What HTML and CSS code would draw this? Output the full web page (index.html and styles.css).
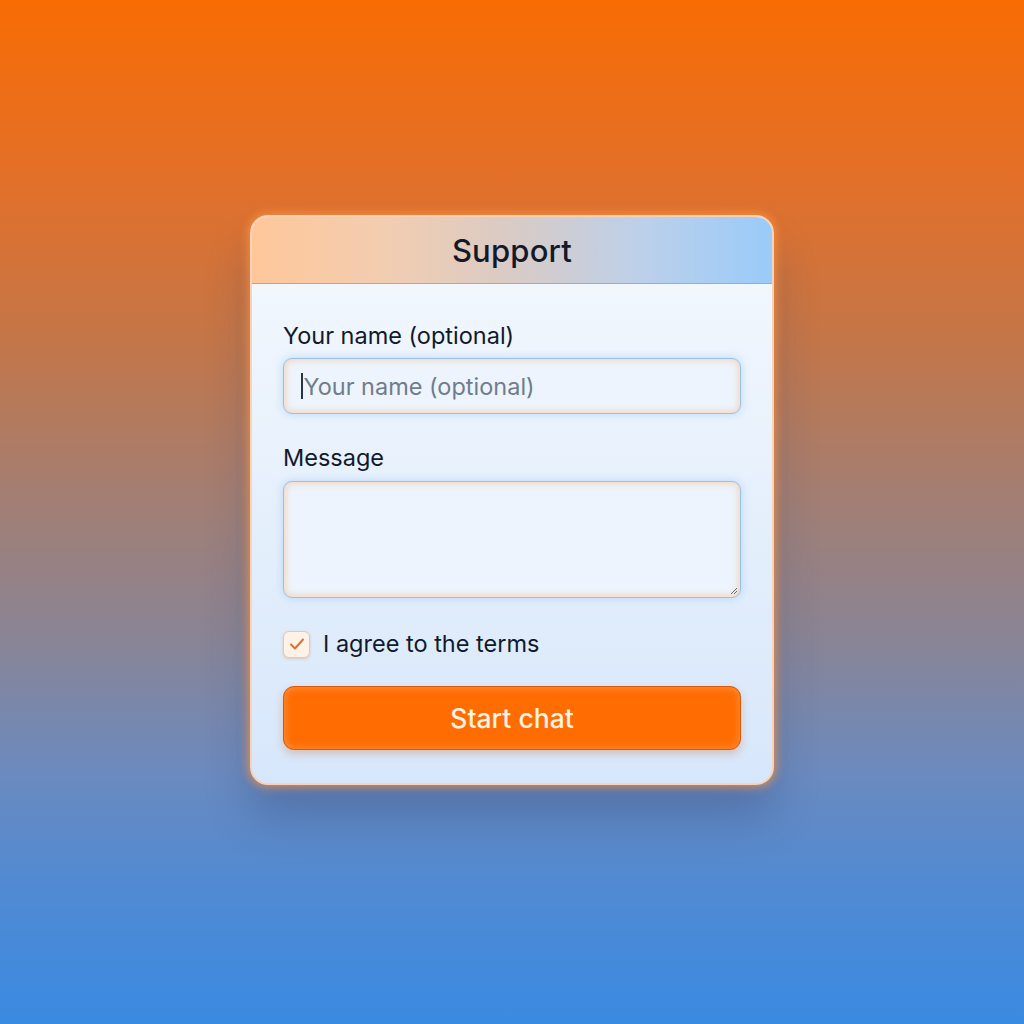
FILE: index.html
```html
<!DOCTYPE html>
<html lang="en">
<head>
<meta charset="utf-8">
<title>Support</title>
<link rel="stylesheet" href="styles.css">
</head>
<body>
<main class="page">
  <section class="card">
    <header class="card-header">
      <h1 class="title">Support</h1>
    </header>
    <form class="card-body">
      <div class="field">
        <label class="label" for="name">Your name (optional)</label>
        <div class="input">
          <span class="caret"></span><span class="placeholder">Your name (optional)</span>
        </div>
      </div>
      <div class="field">
        <label class="label" for="msg">Message</label>
        <div class="textarea">
          <svg class="grip" width="10" height="10" viewBox="0 0 10 10"><path d="M9 3 L3 9 M9 6 L6 9" stroke="#6b6b6b" stroke-width="1" fill="none"/></svg>
        </div>
      </div>
      <div class="check-row">
        <span class="checkbox">
          <svg width="20" height="20" viewBox="0 0 20 20"><path d="M4 10.5 L8 14.5 L16 5.5" stroke="#df6f2b" stroke-width="1.9" fill="none" stroke-linecap="round" stroke-linejoin="round"/></svg>
        </span>
        <span class="check-label">I agree to the terms</span>
      </div>
      <button type="button" class="btn">Start chat</button>
    </form>
  </section>
</main>
</body>
</html>
```
FILE: styles.css
```css
* { box-sizing: border-box; }
html, body { margin: 0; padding: 0; }
body {
  font-family: Inter, "Noto Sans", "Liberation Sans", sans-serif;
  color: #111a2b;
  background: linear-gradient(180deg, #f86c04 0%, #e2702a 18%, #c47648 33%, #a47e72 48%, #8a8494 62%, #6a8ac0 76%, #528ad2 86%, #3a8ae2 100%);
  min-height: 1024px;
}
.page {
  height: 1024px;
  display: flex;
  justify-content: center;
  align-items: flex-start;
  padding-top: 215px;
}
.card {
  width: 524px;
  border-radius: 18px;
  border: 2px solid #fbd2b4;
  overflow: hidden;
  background: linear-gradient(180deg, #f5f9fe 0%, #e6f0fc 50%, #d7e7fb 100%);
  box-shadow: 0 0 10px 2px rgba(255, 150, 70, 0.75), 0 34px 44px rgba(40, 60, 110, 0.28);
}
.card-header {
  height: 67px;
  display: flex;
  align-items: center;
  justify-content: center;
  background: linear-gradient(90deg, #fec79a 0%, #f3cdb0 25%, #d9cbc6 50%, #bcd0ea 75%, #9acbfa 100%);
  border-bottom: 1.5px solid #85b2df;
}
.title {
  margin: 0;
  font-size: 31px;
  font-weight: 500;
  letter-spacing: 0.2px;
  color: #121a2a;
}
.card-body {
  padding: 38px 31px 33px;
  display: flex;
  flex-direction: column;
}
.field { display: flex; flex-direction: column; margin-bottom: 30px; }
.label {
  font-size: 23.5px;
  line-height: 28px;
  margin-bottom: 8px;
  color: #111a2b;
}
.field + .field .label { margin-bottom: 9px; }
.input, .textarea {
  position: relative;
  border: 1.5px solid #9cc0e2;
  border-radius: 9px;
  background: #edf4fd;
  box-shadow: inset 0 0 6px 2px rgba(245, 205, 175, 0.75), 0 0 8px rgba(150, 200, 245, 0.6);
}
.input {
  height: 56px;
  display: flex;
  align-items: center;
  padding-left: 17px;
}
.caret {
  width: 1.5px;
  height: 26px;
  background: #2a3344;
  margin-right: 1px;
}
.placeholder {
  font-size: 23.5px;
  color: #6f7d8b;
}
.textarea { height: 117px; }
.grip { position: absolute; right: 2px; bottom: 2px; }
.check-row {
  display: flex;
  align-items: center;
  gap: 13px;
  height: 28px;
  margin-top: 2px;
  margin-bottom: 28px;
}
.checkbox {
  width: 27px;
  height: 27px;
  border-radius: 6px;
  border: 1.5px solid #efc6a6;
  background: #fdf2e8;
  display: flex;
  align-items: center;
  justify-content: center;
  box-shadow: 0 1px 3px rgba(220, 150, 100, 0.4);
}
.check-label { font-size: 23.5px; line-height: 28px; color: #111a2b; }
.btn {
  height: 64px;
  border: 1.5px solid #d45a12;
  border-radius: 11px;
  background: #ff6c02;
  color: #fff4e4;
  font-family: inherit;
  font-size: 26.5px;
  font-weight: 500;
  box-shadow: inset 0 0 8px rgba(255, 170, 100, 0.7), 0 4px 8px rgba(200, 100, 40, 0.3);
}
```
